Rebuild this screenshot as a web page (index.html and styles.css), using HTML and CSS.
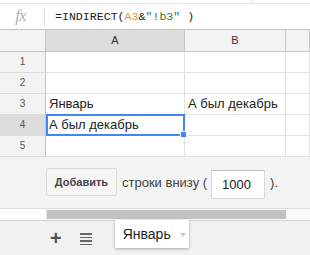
FILE: index.html
```html
<!DOCTYPE html>
<html lang="ru">
<head>
  <meta charset="UTF-8">
  <title>Январь</title>
  <link rel="stylesheet" href="styles.css">
</head>
<body>

<div class="toolbar-edge"><span class="tick"></span></div>

<div class="formula-bar">
  <div class="fx">fx</div>
  <div class="formula">=INDIRECT(<span class="ref">A3</span>&amp;<span class="str">"!b3"</span> )</div>
</div>

<div class="grid">
  <div class="row head-row">
    <div class="cell corner"></div>
    <div class="cell col-head picked">A</div>
    <div class="cell col-head">B</div>
    <div class="cell col-head"></div>
  </div>
  <div class="row">
    <div class="cell row-head">1</div>
    <div class="cell"></div>
    <div class="cell"></div>
    <div class="cell"></div>
  </div>
  <div class="row">
    <div class="cell row-head">2</div>
    <div class="cell"></div>
    <div class="cell"></div>
    <div class="cell"></div>
  </div>
  <div class="row">
    <div class="cell row-head">3</div>
    <div class="cell">Январь</div>
    <div class="cell">А был декабрь</div>
    <div class="cell"></div>
  </div>
  <div class="row">
    <div class="cell row-head picked">4</div>
    <div class="cell active">А был декабрь</div>
    <div class="cell"></div>
    <div class="cell"></div>
  </div>
  <div class="row">
    <div class="cell row-head">5</div>
    <div class="cell"></div>
    <div class="cell"></div>
    <div class="cell"></div>
  </div>
</div>

<div class="add-rows">
  <button class="add-btn">Добавить</button>
  <span class="add-text">строки внизу (</span>
  <input class="add-count" type="text" value="1000">
  <span class="add-text">).</span>
</div>

<div class="hscroll">
  <div class="hscroll-gap"></div>
  <div class="hscroll-thumb"></div>
</div>

<div class="tabs">
  <span class="tab-plus">+</span>
  <span class="tab-list">
    <i></i><i></i><i></i><i></i>
  </span>
  <div class="tab">Январь <span class="tab-arrow"></span></div>
</div>

</body>
</html>
```

FILE: styles.css
```css
body {
  margin: 0;
  width: 310px;
  height: 255px;
  overflow: hidden;
  background: #fff;
  font-family: "Liberation Sans", Arial, sans-serif;
  color: #222;
}
.toolbar-edge {
  height: 3px;
  border-bottom: 1px solid #e2e2e2;
  position: relative;
}
.toolbar-edge .tick {
  position: absolute;
  left: 251px;
  top: 0;
  width: 1px;
  height: 3px;
  background: #e2e2e2;
}
.formula-bar {
  display: flex;
  align-items: center;
  height: 25px;
}
.fx {
  width: 45px;
  height: 18px;
  border-right: 1px solid #dadada;
  font-family: "Liberation Serif", "Times New Roman", serif;
  font-style: italic;
  font-size: 17px;
  line-height: 16px;
  color: #b0b0b0;
  text-align: center;
  letter-spacing: -1px;
  padding-right: 3px;
  box-sizing: border-box;
}
.formula {
  margin-left: 10px;
  font-family: "Liberation Mono", "Courier New", monospace;
  font-size: 11.6px;
  color: #222;
}
.formula .ref {
  color: #e69138;
}
.formula .str {
  color: #38761d;
}
.grid {
  border-top: 1px solid #c4c4c4;
}
.row {
  display: grid;
  grid-template-columns: 46px 139px 101px 1fr;
  height: 21px;
}
.head-row {
  height: 22px;
}
.cell {
  box-sizing: border-box;
  border-right: 1px solid #e2e2e2;
  border-bottom: 1px solid #e2e2e2;
  font-size: 13px;
  line-height: 20px;
  padding-left: 3px;
  white-space: nowrap;
  position: relative;
}
.head-row .cell {
  background: #f3f3f3;
  border-right-color: #c8c8c8;
  border-bottom-color: #c8c8c8;
  font-size: 11px;
  line-height: 21px;
  color: #333;
  text-align: center;
  padding-left: 0;
}
.row-head {
  background: #f3f3f3;
  border-right-color: #c4c4c4;
  border-bottom-color: #dcdcdc;
  font-size: 10px;
  color: #555;
  text-align: center;
  padding-left: 0;
}
.head-row .corner {
  border-right-color: #c4c4c4;
}
.picked,
.head-row .picked {
  background: #dcdcdc;
}
.active::after {
  content: "";
  position: absolute;
  left: 0;
  top: -1px;
  right: -1px;
  bottom: -1px;
  border: 2px solid #4285f4;
}
.active::before {
  content: "";
  position: absolute;
  right: -3px;
  bottom: -3px;
  width: 5px;
  height: 5px;
  background: #4285f4;
  border: 1px solid #fff;
  z-index: 1;
}
.add-rows {
  display: flex;
  align-items: center;
  height: 51px;
  padding-left: 46px;
  background: #f3f3f3;
  border-bottom: 1px solid #dedede;
}
.add-btn {
  height: 28px;
  width: 71px;
  margin-top: -2px;
  background: #f5f5f5;
  border: 1px solid #d9d9d9;
  border-radius: 2px;
  font-family: "Liberation Sans", Arial, sans-serif;
  font-size: 11px;
  font-weight: bold;
  color: #444;
  padding: 0;
}
.add-text {
  font-size: 13px;
  color: #444;
  margin-left: 5px;
}
.add-count {
  width: 54px;
  height: 29px;
  margin-left: 4px;
  margin-top: 4px;
  box-sizing: border-box;
  border: 1px solid #d9d9d9;
  border-top-color: #c0c0c0;
  padding: 0 0 0 10px;
  font-family: "Liberation Sans", Arial, sans-serif;
  font-size: 13px;
  color: #222;
}
.add-count + .add-text {
  margin-left: 5px;
}
.hscroll {
  display: flex;
  height: 11px;
  border-bottom: 1px solid #d4d4d4;
  background: #fafafa;
}
.hscroll-gap {
  width: 47px;
  border-right: 1px solid #e6e6e6;
  box-sizing: border-box;
  background: #fff;
}
.hscroll-thumb {
  width: 239px;
  height: 9px;
  margin-top: 1px;
  background: #c2c2c2;
}
.tabs {
  display: flex;
  align-items: flex-start;
  height: 35px;
  background: #f1f1f1;
}
.tab-plus {
  margin-left: 50px;
  margin-top: 7px;
  font-size: 20px;
  font-weight: bold;
  line-height: 20px;
  color: #555;
}
.tab-list {
  display: flex;
  flex-direction: column;
  gap: 2px;
  margin-left: 18px;
  margin-top: 12px;
}
.tab-list i {
  display: block;
  width: 12px;
  height: 1.5px;
  background: #666;
}
.tab {
  margin-left: 23px;
  margin-top: -1px;
  width: 74px;
  height: 28px;
  box-sizing: border-box;
  background: #fff;
  box-shadow: 0 1px 3px rgba(0, 0, 0, 0.3);
  font-size: 14px;
  line-height: 28px;
  padding-left: 8px;
  color: #222;
}
.tab-arrow {
  display: inline-block;
  margin-left: 5px;
  vertical-align: middle;
  border-left: 3.5px solid transparent;
  border-right: 3.5px solid transparent;
  border-top: 4px solid #c4c4c4;
}
```
